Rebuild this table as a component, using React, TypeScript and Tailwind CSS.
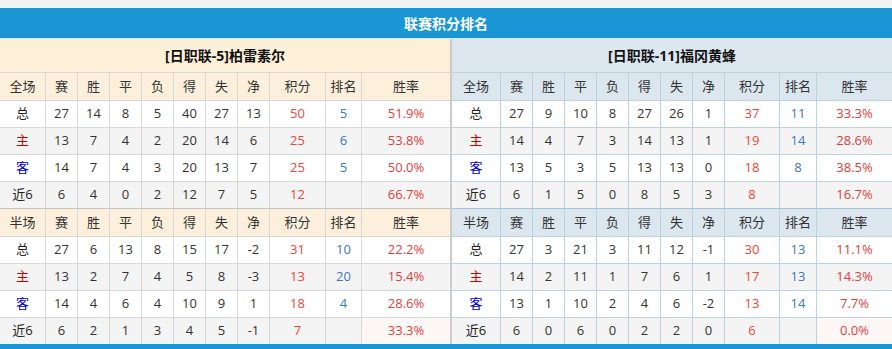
import React from "react";

type Row = { label: string; kind: "t" | "h" | "a" | "n"; v: (string | number)[]; pts: string | number; rank: string | number; rate: string };

const leftFull: Row[] = [
  { label: "总", kind: "t", v: [27, 14, 8, 5, 40, 27, 13], pts: 50, rank: 5, rate: "51.9%" },
  { label: "主", kind: "h", v: [13, 7, 4, 2, 20, 14, 6], pts: 25, rank: 6, rate: "53.8%" },
  { label: "客", kind: "a", v: [14, 7, 4, 3, 20, 13, 7], pts: 25, rank: 5, rate: "50.0%" },
  { label: "近6", kind: "n", v: [6, 4, 0, 2, 12, 7, 5], pts: 12, rank: "", rate: "66.7%" },
];
const leftHalf: Row[] = [
  { label: "总", kind: "t", v: [27, 6, 13, 8, 15, 17, -2], pts: 31, rank: 10, rate: "22.2%" },
  { label: "主", kind: "h", v: [13, 2, 7, 4, 5, 8, -3], pts: 13, rank: 20, rate: "15.4%" },
  { label: "客", kind: "a", v: [14, 4, 6, 4, 10, 9, 1], pts: 18, rank: 4, rate: "28.6%" },
  { label: "近6", kind: "n", v: [6, 2, 1, 3, 4, 5, -1], pts: 7, rank: "", rate: "33.3%" },
];
const rightFull: Row[] = [
  { label: "总", kind: "t", v: [27, 9, 10, 8, 27, 26, 1], pts: 37, rank: 11, rate: "33.3%" },
  { label: "主", kind: "h", v: [14, 4, 7, 3, 14, 13, 1], pts: 19, rank: 14, rate: "28.6%" },
  { label: "客", kind: "a", v: [13, 5, 3, 5, 13, 13, 0], pts: 18, rank: 8, rate: "38.5%" },
  { label: "近6", kind: "n", v: [6, 1, 5, 0, 8, 5, 3], pts: 8, rank: "", rate: "16.7%" },
];
const rightHalf: Row[] = [
  { label: "总", kind: "t", v: [27, 3, 21, 3, 11, 12, -1], pts: 30, rank: 13, rate: "11.1%" },
  { label: "主", kind: "h", v: [14, 2, 11, 1, 7, 6, 1], pts: 17, rank: 13, rate: "14.3%" },
  { label: "客", kind: "a", v: [13, 1, 10, 2, 4, 6, -2], pts: 13, rank: 14, rate: "7.7%" },
  { label: "近6", kind: "n", v: [6, 0, 6, 0, 2, 2, 0], pts: 6, rank: "", rate: "0.0%" },
];

const heads = ["赛", "胜", "平", "负", "得", "失", "净", "积分", "排名", "胜率"];

function Section({ first, rows, side, last }: { first: string; rows: Row[]; side: "l" | "r"; last: boolean }) {
  const bd = side === "l" ? "border-[#d8d8d8]" : "border-[#bcd2df]";
  const bdDark = side === "l" ? "border-b-[#c4c4c4]" : "border-b-[#a8c4d6]";
  const headBg = side === "l" ? "bg-[#fcf0dc]" : "bg-[#dbe6ef]";
  const cols = side === "l" ? "grid-cols-[46px_32px_32px_32px_32px_32px_32px_32px_56px_36px_88px]" : "grid-cols-[49px_32px_32px_32px_32px_32px_32px_32px_55px_37px_75px]";
  const labelCls = (k: Row["kind"]) => (k === "h" ? "text-[#cc0000]" : k === "a" ? "text-[#0000bb]" : "text-[#222]");
  return (
    <div className={`grid ${cols}`}>
      {[first, ...heads].map((h, i) => (
        <div key={"h" + i} className={`h-[28px] flex items-center justify-center ${headBg} border-b ${bd} ${i < 10 ? "border-r" : ""} text-[#333]`}>
          {h}
        </div>
      ))}
      {rows.map((r, ri) => {
        const bg = ri % 2 === 1 ? "bg-[#f4f4f4]" : "bg-white";
        const isLast = ri === rows.length - 1;
        const bb = isLast && last ? "" : isLast ? `border-b ${bdDark}` : "border-b";
        const cell = `${isLast && last ? "h-[26px]" : "h-[27px]"} flex items-center justify-center ${bg} ${bd} ${bb}`;
        return (
          <React.Fragment key={ri}>
            <div className={`${cell} border-r ${labelCls(r.kind)}`}>{r.label}</div>
            {r.v.map((x, i) => (
              <div key={i} className={`${cell} border-r text-[#333]`}>{x}</div>
            ))}
            <div className={`${cell} border-r text-[#e8483a]`}>{r.pts}</div>
            <div className={`${cell} border-r text-[#3a78bc]`}>{r.rank}</div>
            <div className={`${cell} text-[#e0403c] ${isLast && last ? "!bg-[#fdf8f6]" : ""}`}>{r.rate}</div>
          </React.Fragment>
        );
      })}
    </div>
  );
}

function Team({ side, name }: { side: "l" | "r"; name: string }) {
  const bd = side === "l" ? "border-[#d8d8d8]" : "border-[#bcd2df]";
  const bg = side === "l" ? "bg-[#fdf0d9]" : "bg-[#dde7ef]";
  return (
    <div className={side === "l" ? "w-[450px]" : "w-[440px]"}>
      <div className={`h-[34px] ${bg} border-b ${bd} flex items-center justify-center font-bold text-[14px] text-[#111]`}>{name}</div>
      <Section first="全场" rows={side === "l" ? leftFull : rightFull} side={side} last={false} />
      <Section first="半场" rows={side === "l" ? leftHalf : rightHalf} side={side} last={true} />
    </div>
  );
}

export default function App() {
  return (
    <div className="w-[892px] h-[349px] overflow-hidden bg-[#f2f2f4] pt-[8px] text-[13px]" style={{ fontFamily: '"Open Sans", "Noto Sans CJK SC", sans-serif' }}>
      <div className="h-[30px] bg-[#1b96d4] flex items-center justify-center text-white font-bold text-[14px]">联赛积分排名</div>
      <div className="h-[1px] bg-[#d6ebf6]"></div>
      <div className="flex">
        <Team side="l" name="[日职联-5]柏雷素尔" />
        <div className="w-[2px] bg-[#cccccc]"></div>
        <Team side="r" name="[日职联-11]福冈黄蜂" />
      </div>
      <div className="h-[30px] bg-[#1b96d4]"></div>
    </div>
  );
}
